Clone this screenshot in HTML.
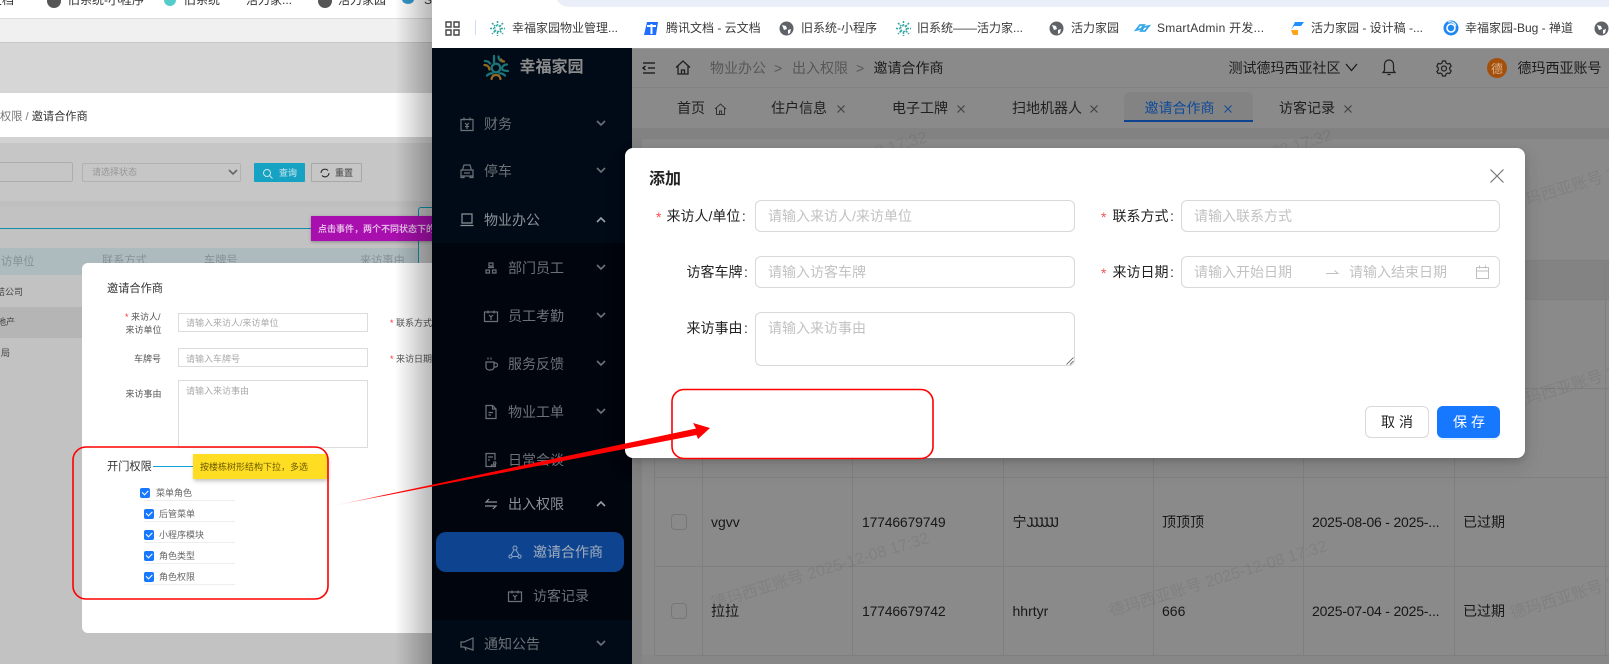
<!DOCTYPE html>
<html lang="zh-CN">
<head>
<meta charset="utf-8">
<title>邀请合作商</title>
<style>
html,body{margin:0;padding:0;background:#c2c2c2}
body{width:1609px;height:664px;position:relative;overflow:hidden;font-family:"Liberation Sans","Noto Sans CJK SC",sans-serif;color:#222}
.a{position:absolute;box-sizing:border-box}
.t{position:absolute;white-space:nowrap;line-height:20px;height:20px}
.s9{font-size:9px}.s11{font-size:11.2px}.s12{font-size:12px}.s14{font-size:14px}
svg{position:absolute;overflow:visible}
.bm{color:#3a3a3a;font-size:12px}
.side{color:#6d7178;font-size:14px}
.tab{font-size:14px;color:#1f1f1f}
.in{position:absolute;border:1px solid #d9d9d9;border-radius:6px;background:#fff;box-sizing:border-box}
.ph{color:#c2c2c2;font-size:14px}
.lb{font-size:14px;color:#222}
.lb i{font-style:normal;padding-left:1.5px}
.red{color:#ff4d4f;font-size:14px}
.ci{position:absolute;border:1px solid #dcdcdc;background:#fff;box-sizing:border-box}
.ck{position:absolute;width:10px;height:10px;background:#1677ff;border-radius:2px}
.ck:after{content:"";position:absolute;left:2px;top:2px;width:5px;height:2.5px;border-left:1.3px solid #fff;border-bottom:1.3px solid #fff;transform:rotate(-45deg)}
.ul{position:absolute;height:1px;background:#eee}
.cell{font-size:14px;color:#171717}
.wm{position:absolute;white-space:nowrap;font-size:16px;line-height:20px;color:rgba(0,0,0,.07);transform-origin:0 50%;transform:rotate(-17deg)}
.sb{position:absolute;background:#7f7f7f}
.chev{stroke:#6d7178;stroke-width:1.6;fill:none}
.ic{stroke:#6d7178;stroke-width:1.2;fill:none}
.hd{stroke:#1f1f1f;stroke-width:1.2;fill:none}
.cb{position:absolute;width:16px;height:16px;border:1px solid #777;border-radius:4px;box-sizing:border-box}
</style>
</head>
<body>

<!-- LEFT BACKGROUND WINDOW -->
<div class="a" style="left:0;top:0;width:432px;height:664px;overflow:hidden;background:#c2c2c2">
  <div class="a" style="left:0;top:0;width:432px;height:18px;background:#fff"></div>
  <div class="a" style="left:0;top:18px;width:432px;height:1px;background:#dcdcdc"></div>
  <div class="a" style="left:0;top:19px;width:432px;height:23px;background:#f0f0f0"></div>
  <div class="a" style="left:0;top:42px;width:432px;height:51px;background:#d6d6d6;border-top:1px solid #c8c8c8"></div>
  <div class="a" style="left:0;top:93px;width:432px;height:44px;background:#fff"></div>
  <div class="a" style="left:0;top:137px;width:432px;height:6px;background:#d2d2d2"></div>
  <div class="a" style="left:0;top:143px;width:432px;height:58px;background:#c6c6c6"></div>
  <div class="a" style="left:0;top:201px;width:432px;height:6px;background:#bfbfbf"></div>

  <div class="t s12" style="left:-10px;top:-10px;color:#333">文档</div>
  <div class="a" style="left:47px;top:-6px;width:14px;height:14px;border-radius:50%;background:#555"></div>
  <div class="t s12" style="left:68px;top:-10px;color:#333">旧系统-小程序</div>
  <div class="a" style="left:164px;top:-6px;width:12px;height:12px;border-radius:50%;background:#5cc"></div>
  <div class="t s12" style="left:184px;top:-10px;color:#333">旧系统</div>
  <div class="t s12" style="left:246px;top:-10px;color:#333">活力家...</div>
  <div class="a" style="left:318px;top:-6px;width:14px;height:14px;border-radius:50%;background:#555"></div>
  <div class="t s12" style="left:338px;top:-10px;color:#333">活力家园</div>
  <div class="a" style="left:402px;top:-5px;width:12px;height:9px;border-radius:50%;background:#39c"></div>
  <div class="t s12" style="left:424px;top:-10px;color:#333">S</div>

  <div class="t s11" style="left:0;top:107px;color:#777">权限 / <span style="color:#333">邀请合作商</span></div>

  <div class="a" style="left:-5px;top:162px;width:78px;height:20px;border:1px solid #adadad;border-radius:2px"></div>
  <div class="a" style="left:82px;top:163px;width:159px;height:19px;border:1px solid #b2b2b2;border-radius:2px"></div>
  <div class="t s9" style="left:92px;top:162px;color:#979797">请选择状态</div>
  <svg style="left:228px;top:169px" width="10" height="7"><path d="M1 1l4 4 4-4" stroke="#666" stroke-width="1.6" fill="none"/></svg>
  <div class="a" style="left:254px;top:163px;width:51px;height:19px;background:#15a2c3;border-radius:1px"></div>
  <svg style="left:262px;top:168px" width="11" height="11"><circle cx="5" cy="5" r="3.5" stroke="#c9e7ef" fill="none"/><path d="M7.5 7.5l3 3" stroke="#c9e7ef"/></svg>
  <div class="t s9" style="left:279px;top:163px;color:#9fd6e3;font-weight:bold">查询</div>
  <div class="a" style="left:311px;top:163px;width:51px;height:19px;border:1px solid #a8a8a8;border-radius:1px"></div>
  <svg style="left:320px;top:168px" width="10" height="10"><path d="M1 5a4 4 0 0 1 7-2.5M9 5a4 4 0 0 1-7 2.5" stroke="#222" fill="none"/></svg>
  <div class="t s9" style="left:335px;top:163px;color:#666;font-weight:bold">重置</div>

  <div class="a" style="left:0;top:228px;width:311px;height:1px;background:#0f8dab"></div>
  <div class="a" style="left:418px;top:207px;width:14px;height:60px;border-left:1px solid #0f8dab;border-top:1px solid #0f8dab;border-top-left-radius:3px"></div>
  <div class="a" style="left:311px;top:216px;width:125px;height:25px;background:#a80fae;box-shadow:0 1px 3px rgba(0,0,0,.3)"></div>
  <div class="t s9" style="left:318px;top:219px;color:#e5b9e7;font-weight:bold">点击事件，两个不同状态下的</div>

  <div class="a" style="left:0;top:248px;width:418px;height:27px;background:#adbbbf"></div>
  <div class="t s11" style="left:1px;top:252px;color:#869195">访单位</div>
  <div class="t s11" style="left:102px;top:251px;color:#869195">联系方式</div>
  <div class="t s11" style="left:204px;top:251px;color:#869195">车牌号</div>
  <div class="t s11" style="left:360px;top:251px;color:#869195">来访事由</div>
  <div class="a" style="left:0;top:307px;width:90px;height:31px;background:#b5b5b5"></div>
  <div class="t s9" style="left:-4px;top:282px;color:#444">结公司</div>
  <div class="t s9" style="left:-3px;top:312px;color:#444">地产</div>
  <div class="t s9" style="left:1px;top:343px;color:#444">局</div>

  <!-- inner modal -->
  <div class="a" style="left:82px;top:263px;width:370px;height:370px;background:#fff;border-radius:6px"></div>
  <div class="t s11" style="left:107px;top:279px;color:#333">邀请合作商</div>
  <div class="t s9" style="left:125px;top:307px;color:#ff3030">*</div>
  <div class="t s9" style="left:131px;top:307px;color:#555">来访人/</div>
  <div class="t s9" style="left:125.500px;top:320px;color:#555">来访单位</div>
  <div class="ci" style="left:178px;top:313px;width:190px;height:19px"></div>
  <div class="t s9" style="left:186px;top:313px;color:#aaa">请输入来访人/来访单位</div>
  <div class="t s9" style="left:390px;top:313px;color:#555"><span style="color:#ff3030">*</span> 联系方式</div>
  <div class="t s9" style="left:134px;top:349px;color:#555">车牌号</div>
  <div class="ci" style="left:178px;top:348px;width:190px;height:19px"></div>
  <div class="t s9" style="left:186px;top:349px;color:#aaa">请输入车牌号</div>
  <div class="t s9" style="left:390px;top:349px;color:#555"><span style="color:#ff3030">*</span> 来访日期</div>
  <div class="t s9" style="left:125.500px;top:384px;color:#555">来访事由</div>
  <div class="ci" style="left:178px;top:380px;width:190px;height:68px"></div>
  <div class="t s9" style="left:186px;top:381px;color:#aaa">请输入来访事由</div>
  <div class="t s11" style="left:107px;top:457px;color:#333">开门权限</div>
  <div class="a" style="left:153px;top:466px;width:40px;height:1px;background:#14a3d6"></div>
  <div class="a" style="left:193px;top:454px;width:134px;height:25px;background:#ffdd22;box-shadow:1px 2px 4px rgba(0,0,0,.25)"></div>
  <div class="t s9" style="left:200px;top:457px;color:#6a5a00">按楼栋树形结构下拉，多选</div>

  <div class="ck" style="left:140px;top:488px"></div><div class="t s9" style="left:156px;top:483px;color:#666">菜单角色</div><div class="ul" style="left:144px;top:500px;width:91px"></div>
  <div class="ck" style="left:144px;top:509px"></div><div class="t s9" style="left:159px;top:504px;color:#666">后管菜单</div><div class="ul" style="left:144px;top:521px;width:91px"></div>
  <div class="ck" style="left:144px;top:530px"></div><div class="t s9" style="left:159px;top:525px;color:#666">小程序模块</div><div class="ul" style="left:144px;top:542px;width:91px"></div>
  <div class="ck" style="left:144px;top:551px"></div><div class="t s9" style="left:159px;top:546px;color:#666">角色类型</div><div class="ul" style="left:144px;top:563px;width:91px"></div>
  <div class="ck" style="left:144px;top:572px"></div><div class="t s9" style="left:159px;top:567px;color:#666">角色权限</div><div class="ul" style="left:144px;top:584px;width:91px"></div>

  <!-- window shadow fade -->
  <div class="a" style="left:395px;top:0;width:37px;height:664px;background:linear-gradient(90deg,rgba(0,0,0,0),rgba(0,0,0,.28))"></div>
</div>

<!-- RIGHT WINDOW -->
<div class="a" style="left:432px;top:0;width:1177px;height:48px;background:#fff"></div>
<div class="a" style="left:555px;top:-20px;width:1054px;height:27px;background:#e9eef8;border-radius:0 0 0 14px"></div>

<!-- bookmarks bar -->
<svg style="left:445px;top:21px" width="15" height="15"><path d="M1 1h5v5H1zM9 1h5v5H9zM1 9h5v5H1zM9 9h5v5H9z" stroke="#444" stroke-width="1.4" fill="none"/></svg>
<div class="a" style="left:475px;top:20px;width:1px;height:15px;background:#cfdcf5"></div>

<svg style="left:490px;top:21px" width="15" height="15" viewBox="0 0 15 15"><g stroke="#2fa6a0" stroke-width="1.5" stroke-dasharray="2 1" fill="none"><circle cx="7.500" cy="7.500" r="3"/><path d="M7.500 0v4M7.500 11v4M0 7.500h4M11 7.500h4M2 2l3 3M10 10l3 3M13 2l-3 3M5 10l-3 3"/></g></svg>
<div class="t bm" style="left:512px;top:18px">幸福家园物业管理...</div>
<svg style="left:644px;top:21px" width="15" height="15" viewBox="0 0 15 15"><path d="M3 1h11l-2 13H0z" fill="#1e6fff"/><path d="M3 5h9M7.500 3v10" stroke="#fff" stroke-width="2"/></svg>
<div class="t bm" style="left:666px;top:18px">腾讯文档 - 云文档</div>
<svg style="left:779px;top:21px" width="15" height="15" viewBox="0 0 15 15"><circle cx="7.500" cy="7.500" r="7" fill="#5f6368"/><path d="M3 4l4 1 1 3-3 1zM9 9l3-1-1 4-2 1z" fill="#fff"/></svg>
<div class="t bm" style="left:801px;top:18px">旧系统-小程序</div>
<svg style="left:896px;top:21px" width="15" height="15" viewBox="0 0 15 15"><g stroke="#2fa6a0" stroke-width="1.5" stroke-dasharray="2 1" fill="none"><circle cx="7.500" cy="7.500" r="3"/><path d="M7.500 0v4M7.500 11v4M0 7.500h4M11 7.500h4M2 2l3 3M10 10l3 3M13 2l-3 3M5 10l-3 3"/></g></svg>
<div class="t bm" style="left:917px;top:18px">旧系统——活力家...</div>
<svg style="left:1049px;top:21px" width="15" height="15" viewBox="0 0 15 15"><circle cx="7.500" cy="7.500" r="7" fill="#5f6368"/><path d="M3 4l4 1 1 3-3 1zM9 9l3-1-1 4-2 1z" fill="#fff"/></svg>
<div class="t bm" style="left:1071px;top:18px">活力家园</div>
<svg style="left:1135px;top:22px" width="15" height="12" viewBox="0 0 15 12"><path d="M1 8l4-5h4L6 7zM14 4l-4 5H6l3-4z" fill="none" stroke="#37a9e8" stroke-width="1.8"/></svg>
<div class="t bm" style="left:1157px;top:18px;letter-spacing:.25px">SmartAdmin 开发...</div>
<svg style="left:1290px;top:21px" width="15" height="15" viewBox="0 0 15 15"><path d="M5 1h9L11 5H4L1 9l2-4z" fill="#1e90ff"/><path d="M1 9h7v5H3z" fill="#ffa31a"/></svg>
<div class="t bm" style="left:1311px;top:18px">活力家园 - 设计稿 -...</div>
<svg style="left:1443px;top:20px" width="16" height="16" viewBox="0 0 16 16"><circle cx="8" cy="8" r="7.500" fill="#1e88f0"/><circle cx="8" cy="8" r="4" fill="none" stroke="#fff" stroke-width="1.6"/><path d="M5 2c4-1 7 1 8 4" stroke="#fff" fill="none"/></svg>
<div class="t bm" style="left:1465px;top:18px">幸福家园-Bug - 禅道</div>
<svg style="left:1594px;top:21px" width="15" height="15" viewBox="0 0 15 15"><circle cx="7.500" cy="7.500" r="7" fill="#5f6368"/><path d="M3 4l4 1 1 3-3 1zM9 9l3-1-1 4-2 1z" fill="#fff"/></svg>

<!-- SIDEBAR -->
<div class="a" style="left:432px;top:48px;width:200px;height:616px;background:#000b17"></div>
<div class="a" style="left:432px;top:243px;width:200px;height:377px;background:#00050e"></div>
<svg style="left:482px;top:54px" width="28" height="28" viewBox="0 0 28 28">
  <g fill="none" stroke-linecap="round" stroke-width="2.300">
    <circle cx="14" cy="14" r="4.300" stroke="#1c7378"/>
    <path d="M12 2v6" stroke="#1c7378"/>
    <path d="M16.500 2.500c0 3 2 5 4.500 5" stroke="#1c7378"/>
    <path d="M25 10.500c-3 0-4.500 1.500-5 4M26 17c-2.500 0-4-.5-5.500-1" stroke="#1c7378"/>
    <path d="M23 21.500c-2-2-3.500-2.500-5.500-2" stroke="#1c7378"/>
    <path d="M9.500 25c.5-2.500 2-4 4.500-4s4 1.500 4.500 4" stroke="#95681f"/>
    <path d="M5 21.500c2-2 3.500-2.500 5.500-2" stroke="#1c7378"/>
    <path d="M2.500 11c3 0 4.500 1.500 5 4.500" stroke="#95681f"/>
    <path d="M3 7c2 0 4 1 5 2.500" stroke="#1c7378"/>
    <path d="M19 5.500c1 1.500 2 2 3 2" stroke="#95681f"/>
  </g>
</svg>
<div class="t" style="left:519.500px;top:58px;font-size:16px;font-weight:bold;color:#8c8c8c">幸福家园</div>

<svg style="left:460px;top:117px" width="14" height="14"><path class="ic" d="M1 2.500h12v11H1zM4 .5v3M10 .5v3M5 6l2 2 2-2M7 8v4M5 9.500h4"/></svg>
<div class="t side" style="left:484px;top:114px">财务</div>
<svg style="left:596px;top:120px" width="10" height="7"><path class="chev" d="M1 1l4 4 4-4"/></svg>

<svg style="left:460px;top:164px" width="14" height="14"><path class="ic" d="M2.500 6l1.500-5h6l1.500 5M1 6h12v6H1zM1 12v1.500h3V12M10 12v1.500h3V12M4 9h6"/></svg>
<div class="t side" style="left:484px;top:161px">停车</div>
<svg style="left:596px;top:167px" width="10" height="7"><path class="chev" d="M1 1l4 4 4-4"/></svg>

<svg style="left:460px;top:213px" width="14" height="14"><path class="ic" style="stroke:#8d9299" d="M2 1h10v9H2zM.5 12.500h13"/></svg>
<div class="t side" style="left:484px;top:210px;color:#8d9299">物业办公</div>
<svg style="left:596px;top:216px" width="10" height="7"><path class="chev" style="stroke:#9aa0a6" d="M1 6l4-4 4 4"/></svg>

<svg style="left:485px;top:262px" width="12" height="12"><path class="ic" d="M4 1h4v3H4zM1 8h3.500v3H1zM7.500 8H11v3H7.500zM3 5.500h6"/></svg>
<div class="t side" style="left:508px;top:258px">部门员工</div>
<svg style="left:596px;top:264px" width="10" height="7"><path class="chev" d="M1 1l4 4 4-4"/></svg>

<svg style="left:484px;top:310px" width="14" height="12"><path class="ic" d="M.5 2h13v9.500H.5zM4 .5v3M10 .5v3M5 5l2 2 2-2M7 7v3"/></svg>
<div class="t side" style="left:508px;top:306px">员工考勤</div>
<svg style="left:596px;top:312px" width="10" height="7"><path class="chev" d="M1 1l4 4 4-4"/></svg>

<svg style="left:485px;top:357px" width="13" height="14"><path class="ic" d="M1 5h8v5a3 3 0 0 1-3 3H4a3 3 0 0 1-3-3zM9 6h1.500a1.500 1.500 0 0 1 0 4H9M3 .5v2M6 .5v2"/></svg>
<div class="t side" style="left:508px;top:354px">服务反馈</div>
<svg style="left:596px;top:360px" width="10" height="7"><path class="chev" d="M1 1l4 4 4-4"/></svg>

<svg style="left:485px;top:405px" width="12" height="14"><path class="ic" d="M1 .5h6.500L11 4v9.500H1zM7.500.5V4H11M3.500 7.500H8M3.500 10H6"/></svg>
<div class="t side" style="left:508px;top:402px">物业工单</div>
<svg style="left:596px;top:408px" width="10" height="7"><path class="chev" d="M1 1l4 4 4-4"/></svg>

<svg style="left:485px;top:453px" width="12" height="14"><path class="ic" d="M10 7V.5H1v13h5M3 4h5M3 7h2M8.500 10a1.200 1.200 0 1 0 0-.1M6.500 13.500h4V12h-4z"/></svg>
<div class="t side" style="left:508px;top:450px">日常会谈</div>

<svg style="left:485px;top:498px" width="12" height="12"><path class="ic" style="stroke:#8d9299" d="M4 1L1 4h11M8 11l3-3H0"/></svg>
<div class="t side" style="left:508px;top:494px;color:#8d9299">出入权限</div>
<svg style="left:596px;top:500px" width="10" height="7"><path class="chev" style="stroke:#9aa0a6" d="M1 6l4-4 4 4"/></svg>

<div class="a" style="left:436px;top:532px;width:188px;height:40px;background:#0e448f;border-radius:10px"></div>
<svg style="left:508px;top:545px" width="14" height="14"><circle cx="7" cy="3" r="2" fill="none" stroke="#8ea3c2"/><circle cx="2.500" cy="11.500" r="1.600" fill="none" stroke="#8ea3c2"/><circle cx="11.500" cy="11.500" r="1.600" fill="none" stroke="#8ea3c2"/><path d="M6 5l-3 5M8 5l3 5M4 11.500h6" stroke="#8ea3c2" fill="none"/></svg>
<div class="t side" style="left:533px;top:542px;color:#a3adbd">邀请合作商</div>
<svg style="left:508px;top:590px" width="14" height="12"><path class="ic" d="M.5 2h13v9.500H.5zM4 .5v3M10 .5v3M5 5l2 2 2-2M7 7v3"/></svg>
<div class="t side" style="left:533px;top:586px">访客记录</div>

<svg style="left:460px;top:637px" width="14" height="14"><path class="ic" d="M1 5h3l9-4v12L4 10H1zM5 10.500l1 3"/></svg>
<div class="t side" style="left:484px;top:634px">通知公告</div>
<svg style="left:596px;top:640px" width="10" height="7"><path class="chev" d="M1 1l4 4 4-4"/></svg>

<!-- MAIN (dimmed) -->
<div class="a" style="left:632px;top:48px;width:977px;height:616px;background:#828282"></div>
<div class="a" style="left:632px;top:48px;width:977px;height:39px;background:#8a8a8a;box-shadow:inset 0 1px 0 #999"></div>
<div class="a" style="left:632px;top:87px;width:977px;height:41px;background:#8a8a8a;border-top:1px solid #828282"></div>

<svg style="left:642px;top:62px" width="14" height="12"><path d="M1 1h12M6 6h7M1 11h12M3.500 4L1 6l2.500 2" stroke="#111" stroke-width="1.300" fill="none"/></svg>
<svg style="left:675px;top:60px" width="16" height="15"><path class="hd" style="stroke-width:1.300" d="M1 7.500L8 1l7 6.500M3 6v8h10V6M6.500 14v-4h3v4"/></svg>
<div class="t s14" style="left:710px;top:58px;color:#575757">物业办公</div>
<div class="t s14" style="left:774px;top:58px;color:#575757">&gt;</div>
<div class="t s14" style="left:792px;top:58px;color:#575757">出入权限</div>
<div class="t s14" style="left:856px;top:58px;color:#575757">&gt;</div>
<div class="t s14" style="left:873.500px;top:58px;color:#1c1c1c">邀请合作商</div>

<div class="t s14" style="left:1228.500px;top:58px;color:#1c1c1c">测试德玛西亚社区</div>
<svg style="left:1345px;top:63px" width="13" height="9"><path d="M1 1l5.500 6.500L12 1" stroke="#1c1c1c" stroke-width="1.300" fill="none"/></svg>
<svg style="left:1382px;top:59px" width="14" height="17"><path class="hd" d="M7 1a4.500 4.500 0 0 0-4.500 4.500v6L1 13.500h12l-1.500-2v-6A4.500 4.500 0 0 0 7 1zM5.500 15.500h3"/></svg>
<svg style="left:1436px;top:60px" width="16" height="16" viewBox="0 0 16 16"><path class="hd" d="M6.500 1h3l.5 2 1.700 1 2-.6 1.500 2.600-1.500 1.500v2l1.500 1.500-1.500 2.600-2-.6-1.700 1-.5 2h-3l-.5-2-1.700-1-2 .6L.8 11.500 2.300 10V8L.8 6.500 2.300 3.400l2 .6 1.700-1z"/><circle class="hd" cx="8" cy="8.500" r="2.500"/></svg>
<div class="a" style="left:1487px;top:58px;width:20px;height:20px;border-radius:50%;background:#a5500a"></div>
<div class="t s12" style="left:1491px;top:59px;color:#d9b08c">德</div>
<div class="t s14" style="left:1517.500px;top:58px;color:#1c1c1c">德玛西亚账号</div>

<!-- tabs -->
<div class="t tab" style="left:677px;top:98px">首页</div>
<svg style="left:714px;top:103px" width="13" height="12"><path d="M1 6l5.500-5L12 6M2.500 5v6.500h8V5M5.500 11.500V8h2v3.500" stroke="#333" fill="none"/></svg>
<div class="t tab" style="left:771px;top:98px">住户信息</div>
<svg style="left:837px;top:105px" width="8" height="8"><path d="M.5.5l7 7M7.500.5l-7 7" stroke="#3d3d3d"/></svg>
<div class="t tab" style="left:892px;top:98px">电子工牌</div>
<svg style="left:957px;top:105px" width="8" height="8"><path d="M.5.5l7 7M7.500.5l-7 7" stroke="#3d3d3d"/></svg>
<div class="t tab" style="left:1012px;top:98px">扫地机器人</div>
<svg style="left:1090px;top:105px" width="8" height="8"><path d="M.5.5l7 7M7.500.5l-7 7" stroke="#3d3d3d"/></svg>
<div class="a" style="left:1124px;top:92px;width:129px;height:30px;background:#838383;border-radius:6px 6px 0 0;border-bottom:2px solid #0e448f"></div>
<div class="t tab" style="left:1144.500px;top:98px;color:#0e4a9a">邀请合作商</div>
<svg style="left:1224px;top:105px" width="8" height="8"><path d="M.5.5l7 7M7.500.5l-7 7" stroke="#0e4a9a"/></svg>
<div class="t tab" style="left:1279px;top:98px">访客记录</div>
<svg style="left:1344px;top:105px" width="8" height="8"><path d="M.5.5l7 7M7.500.5l-7 7" stroke="#3d3d3d"/></svg>

<!-- table -->
<div class="a" style="left:642px;top:139px;width:967px;height:516px;background:#8a8a8a"></div>
<div class="a" style="left:642px;top:655px;width:967px;height:9px;background:#878787"></div>
<div class="a" style="left:655px;top:260px;width:954px;height:39px;background:#838383"></div>
<div class="sb" style="left:655px;top:260px;width:954px;height:1px"></div>
<div class="sb" style="left:655px;top:299px;width:954px;height:1px"></div>
<div class="sb" style="left:655px;top:388px;width:954px;height:1px"></div>
<div class="sb" style="left:655px;top:477px;width:954px;height:1px"></div>
<div class="sb" style="left:655px;top:566px;width:954px;height:1px"></div>
<div class="sb" style="left:655px;top:655px;width:954px;height:1px"></div>
<div class="sb" style="left:654px;top:260px;width:1px;height:395px"></div>
<div class="sb" style="left:702px;top:260px;width:1px;height:395px"></div>
<div class="sb" style="left:852px;top:260px;width:1px;height:395px"></div>
<div class="sb" style="left:1003px;top:260px;width:1px;height:395px"></div>
<div class="sb" style="left:1153px;top:260px;width:1px;height:395px"></div>
<div class="sb" style="left:1303px;top:260px;width:1px;height:395px"></div>
<div class="sb" style="left:1454px;top:260px;width:1px;height:395px"></div>
<div class="sb" style="left:1605px;top:260px;width:1px;height:395px"></div>

<div class="cb" style="left:671px;top:514px"></div>
<div class="t cell" style="left:711px;top:512px">vgvv</div>
<div class="t cell" style="left:862px;top:512px;letter-spacing:-.2px">17746679749</div>
<div class="t cell" style="left:1012.500px;top:512px">宁<span style="letter-spacing:-1.9px">JJJJJJ</span></div>
<div class="t cell" style="left:1162px;top:512px">顶顶顶</div>
<div class="t cell" style="left:1312px;top:512px;letter-spacing:-.2px">2025-08-06 - 2025-...</div>
<div class="t cell" style="left:1463px;top:512px">已过期</div>

<div class="cb" style="left:671px;top:603px"></div>
<div class="t cell" style="left:711px;top:601px">拉拉</div>
<div class="t cell" style="left:862px;top:601px;letter-spacing:-.2px">17746679742</div>
<div class="t cell" style="left:1012.500px;top:601px">hhrtyr</div>
<div class="t cell" style="left:1162px;top:601px">666</div>
<div class="t cell" style="left:1312px;top:601px;letter-spacing:-.2px">2025-07-04 - 2025-...</div>
<div class="t cell" style="left:1463px;top:601px">已过期</div>

<!-- watermarks -->
<div class="wm" style="left:712px;top:595px">德玛西亚账号 2025-12-08 17:32</div>
<div class="wm" style="left:1110px;top:603px">德玛西亚账号 2025-12-08 17:32</div>
<div class="wm" style="left:1511px;top:605px">德玛西亚账号 2025-12-08 17:32</div>
<div class="wm" style="left:1511px;top:395px">德玛西亚账号 2025-12-08 17:32</div>
<div class="wm" style="left:1511px;top:196px">德玛西亚账号 2025-12-08 17:32</div>
<div class="wm" style="left:1115px;top:192px">德玛西亚账号 2025-12-08 17:32</div>
<div class="wm" style="left:710px;top:194px">德玛西亚账号 2025-12-08 17:32</div>

<!-- MODAL -->
<div class="a" style="left:625px;top:148px;width:900px;height:310px;background:#fff;border-radius:8px;box-shadow:0 6px 16px rgba(0,0,0,.08),0 3px 6px rgba(0,0,0,.12),0 9px 28px rgba(0,0,0,.05)"></div>
<div class="t" style="left:649px;top:170px;font-size:16px;font-weight:bold;color:#222">添加</div>
<svg style="left:1490px;top:169px" width="14" height="14"><path d="M.5.5l13 13M13.500.5l-13 13" stroke="#777" stroke-width="1.200"/></svg>

<div class="t red" style="left:656px;top:207px">*</div>
<div class="t lb" style="left:666.500px;top:206px">来访人/单位<i>:</i></div>
<div class="in" style="left:755px;top:200px;width:320px;height:32px"></div>
<div class="t ph" style="left:768px;top:206px">请输入来访人/来访单位</div>

<div class="t red" style="left:1101px;top:207px">*</div>
<div class="t lb" style="left:1112.500px;top:206px">联系方式<i>:</i></div>
<div class="in" style="left:1181px;top:200px;width:319px;height:32px"></div>
<div class="t ph" style="left:1194px;top:206px">请输入联系方式</div>

<div class="t lb" style="left:686.500px;top:262px">访客车牌<i>:</i></div>
<div class="in" style="left:755px;top:256px;width:320px;height:32px"></div>
<div class="t ph" style="left:768px;top:262px">请输入访客车牌</div>

<div class="t red" style="left:1101px;top:263px">*</div>
<div class="t lb" style="left:1112.500px;top:262px">来访日期<i>:</i></div>
<div class="in" style="left:1181px;top:256px;width:319px;height:32px"></div>
<div class="t ph" style="left:1194px;top:262px">请输入开始日期</div>
<svg style="left:1326px;top:269px" width="13" height="6"><path d="M0 4.500h12L8.500 1.500" stroke="#bfbfbf" fill="none"/></svg>
<div class="t ph" style="left:1349px;top:262px">请输入结束日期</div>
<svg style="left:1476px;top:265px" width="13" height="14"><path d="M.5 2.500h12v11H.5zM.5 6h12M3.500.5v3M9.500.5v3" stroke="#bfbfbf" fill="none"/></svg>

<div class="t lb" style="left:686.500px;top:318px">来访事由<i>:</i></div>
<div class="in" style="left:755px;top:312px;width:320px;height:54px"></div>
<div class="t ph" style="left:768px;top:318px">请输入来访事由</div>
<svg style="left:1066px;top:357px" width="8" height="8"><path d="M.5 7.500l7-7M4 7.500l3.500-3.500" stroke="#555" stroke-width=".8"/></svg>

<div class="a" style="left:1365px;top:406px;width:64px;height:32px;border:1px solid #d9d9d9;border-radius:6px;background:#fff"></div>
<div class="t s14" style="left:1381px;top:412px;letter-spacing:4px;color:#222">取消</div>
<div class="a" style="left:1437px;top:406px;width:63px;height:32px;background:#1677ff;border-radius:6px;box-shadow:0 2px 0 rgba(5,145,255,.1)"></div>
<div class="t s14" style="left:1453px;top:412px;letter-spacing:4px;color:#fff">保存</div>

<!-- RED ANNOTATIONS -->
<svg style="left:0;top:0" width="1609" height="664" viewBox="0 0 1609 664">
  <defs>
    <linearGradient id="fade" gradientUnits="userSpaceOnUse" x1="332" y1="506" x2="385" y2="495">
      <stop offset="0" stop-color="#ff0000" stop-opacity="0"/>
      <stop offset="1" stop-color="#ff0000"/>
    </linearGradient>
  </defs>
  <rect x="73" y="447" width="255" height="152" rx="13" fill="none" stroke="#ff0000" stroke-width="1.600"/>
  <rect x="672" y="389.500" width="261" height="69" rx="12" fill="none" stroke="#ff0000" stroke-width="1.600"/>
  <polygon points="332,506 696,428.500 693,423 710,428 698,439 696.500,435" fill="url(#fade)"/>
</svg>

</body>
</html>
